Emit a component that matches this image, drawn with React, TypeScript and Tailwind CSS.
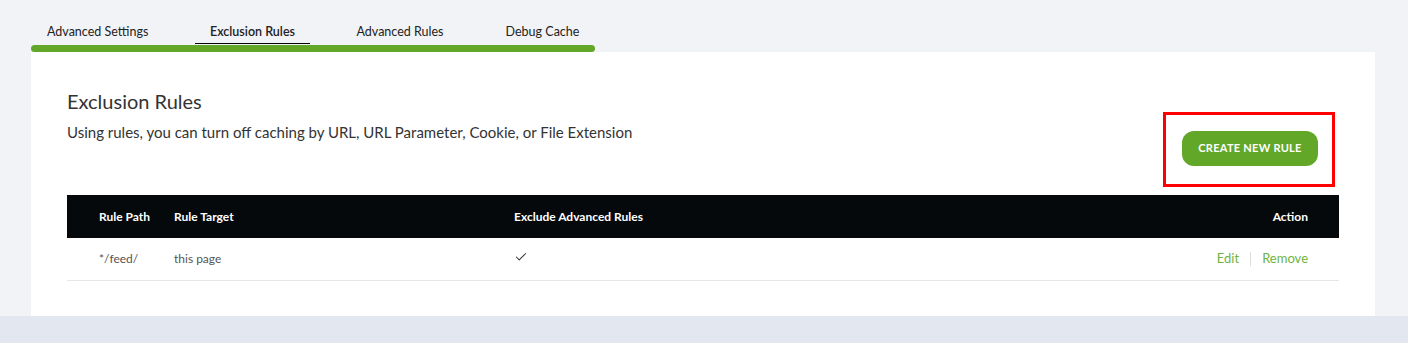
import { Check } from "lucide-react";

const TABS = ["Advanced Settings", "Exclusion Rules", "Advanced Rules", "Debug Cache"];

interface Rule {
  path: string;
  target: string;
  excludeAdvanced: boolean;
}

const RULES: Rule[] = [{ path: "*/feed/", target: "this page", excludeAdvanced: true }];

const App = () => {
  return (
    <div className="min-h-[343px] bg-[#e3e7ef] font-['Lato',sans-serif]">
      <div className="bg-[#f2f3f7] pl-[31px] pr-[33px] pt-[22px]">
        {/* tabs */}
        <div className="flex h-[23px] w-[564px] items-start pt-[1px] text-[12.5px] text-[#222]">
          <button className="w-[164px] pl-[16px] text-left">{TABS[0]}</button>
          <button className="flex h-[21px] w-[115px] justify-center border-b border-black font-semibold">
            {TABS[1]}
          </button>
          <button className="w-[180px] text-center">{TABS[2]}</button>
          <button className="w-[105px] text-center">{TABS[3]}</button>
        </div>
        <div className="h-[7px] w-[564px] rounded-full bg-[#62a728]" />

        <div className="bg-white px-[36px] pb-[35px] pt-[36px]">
          <div className="flex items-start justify-between pr-[4px]">
            <div>
              <h2 className="text-[20px] leading-[26px] text-[#333]">Exclusion Rules</h2>
              <p className="mt-[7px] text-[15px] text-[#333]">
                Using rules, you can turn off caching by URL, URL Parameter, Cookie, or File Extension
              </p>
            </div>
            <div className="mt-[24px] border-[3px] border-[#ff0000] pb-[18px] pl-[16px] pr-[14px] pt-[16px]">
              <button className="h-[35px] w-[136px] rounded-[12px] bg-[#62a728] text-[11px] font-bold tracking-wide text-white">
                CREATE NEW RULE
              </button>
            </div>
          </div>

          <table className="mt-[8px] w-full text-[12px]">
            <thead>
              <tr className="h-[43px] bg-[#05090c] text-left text-white">
                <th className="w-[107px] pl-[32px] font-bold">Rule Path</th>
                <th className="w-[340px] font-bold">Rule Target</th>
                <th className="font-bold">Exclude Advanced Rules</th>
                <th className="pr-[31px] text-right font-bold">Action</th>
              </tr>
            </thead>
            <tbody>
              {RULES.map((rule) => (
                <tr key={rule.path} className="h-[42px] border-b border-[#e6e6e6] text-[#555]">
                  <td className="pl-[32px]">{rule.path}</td>
                  <td>{rule.target}</td>
                  <td>
                    {rule.excludeAdvanced && (
                      <Check className="mb-[4px] h-[14px] w-[14px] text-[#333]" strokeWidth={1.75} />
                    )}
                  </td>
                  <td className="pr-[31px] text-right">
                    <span className="inline-flex items-center text-[13px] text-[#6fb33f]">
                      <a>Edit</a>
                      <span className="mx-[11px] h-[14px] w-px bg-[#ddd]" />
                      <a>Remove</a>
                    </span>
                  </td>
                </tr>
              ))}
            </tbody>
          </table>
        </div>
      </div>
    </div>
  );
};

export default App;
